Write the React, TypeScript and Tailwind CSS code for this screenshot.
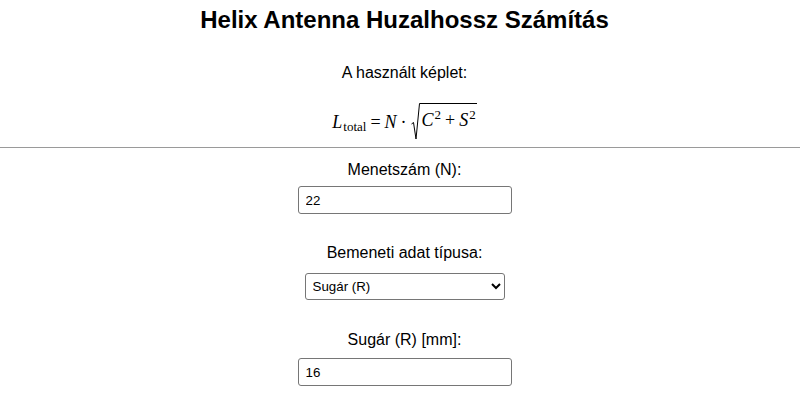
import React from 'react';

const sans = { fontFamily: '"Liberation Sans", Arial, sans-serif' };

export default function App() {
  return (
    <div className="min-h-screen bg-white text-black flex flex-col items-center pl-[9px]" style={sans}>
      {/* Title */}
      <h1 className="mt-[6px] text-[24px] leading-[28px] font-bold">Helix Antenna Huzalhossz Számítás</h1>

      {/* Formula */}
      <p className="mt-[30px] text-[16px] leading-[18px]">A használt képlet:</p>
      <Formula />

      <div className="-ml-[9px] w-[calc(100%+9px)] h-px bg-[#9a9a9a] mt-[5px]" />

      {/* Inputs */}
      <label className="mt-[13px] text-[16px] leading-[18px]">Menetszám (N):</label>
      <input
        type="text"
        defaultValue="22"
        className="mt-[7px] w-[214px] h-[28px] px-[7px] text-[13.33px] border border-[#767676] rounded-[3px] bg-white outline-none"
        style={sans}
      />

      <label className="mt-[30px] text-[16px] leading-[18px]">Bemeneti adat típusa:</label>
      <select
        defaultValue="R"
        className="mt-[11px] w-[200px] h-[27px] pl-[3px] text-[13.33px] border border-[#767676] rounded-[3px] bg-white outline-none"
        style={sans}
      >
        <option value="R">Sugár (R)</option>
        <option value="D">Átmérő (D)</option>
        <option value="C">Kerület (C)</option>
      </select>

      <label className="mt-[31px] text-[16px] leading-[18px]">Sugár (R) [mm]:</label>
      <input
        type="text"
        defaultValue="16"
        className="mt-[9px] w-[214px] h-[28px] px-[7px] text-[13.33px] border border-[#767676] rounded-[3px] bg-white outline-none"
        style={sans}
      />
    </div>
  );
}

function Formula() {
  const serif = { fontFamily: '"Liberation Serif", "Times New Roman", serif' };
  return (
    <div className="mt-[20px] h-[40px] flex items-start text-[18px] leading-[20px]" style={serif}>
      <div className="mt-[10px] flex items-baseline">
        <span className="italic">L</span>
        <span className="text-[13px] ml-[1px] relative top-[3px]">total</span>
        <span className="mx-[4px]">=</span>
        <span className="italic">N</span>
        <span className="mx-[4px]">·</span>
      </div>
      <div className="flex items-start">
        <svg width="9" height="38" viewBox="0 0 9 38" className="mt-[1px]">
          <path d="M0.5 21 L2.5 19.5 L5 36 L8.5 0.5 L9 0.5" fill="none" stroke="black" strokeWidth="1" />
        </svg>
        <div className="border-t border-black mt-[1px] pt-[6px] pl-[2px] pr-[1px] flex items-baseline">
          <span className="italic">C</span>
          <span className="text-[13px] relative -top-[7px] ml-[1px]">2</span>
          <span className="mx-[4px]">+</span>
          <span className="italic">S</span>
          <span className="text-[13px] relative -top-[7px] ml-[1px]">2</span>
        </div>
      </div>
    </div>
  );
}
